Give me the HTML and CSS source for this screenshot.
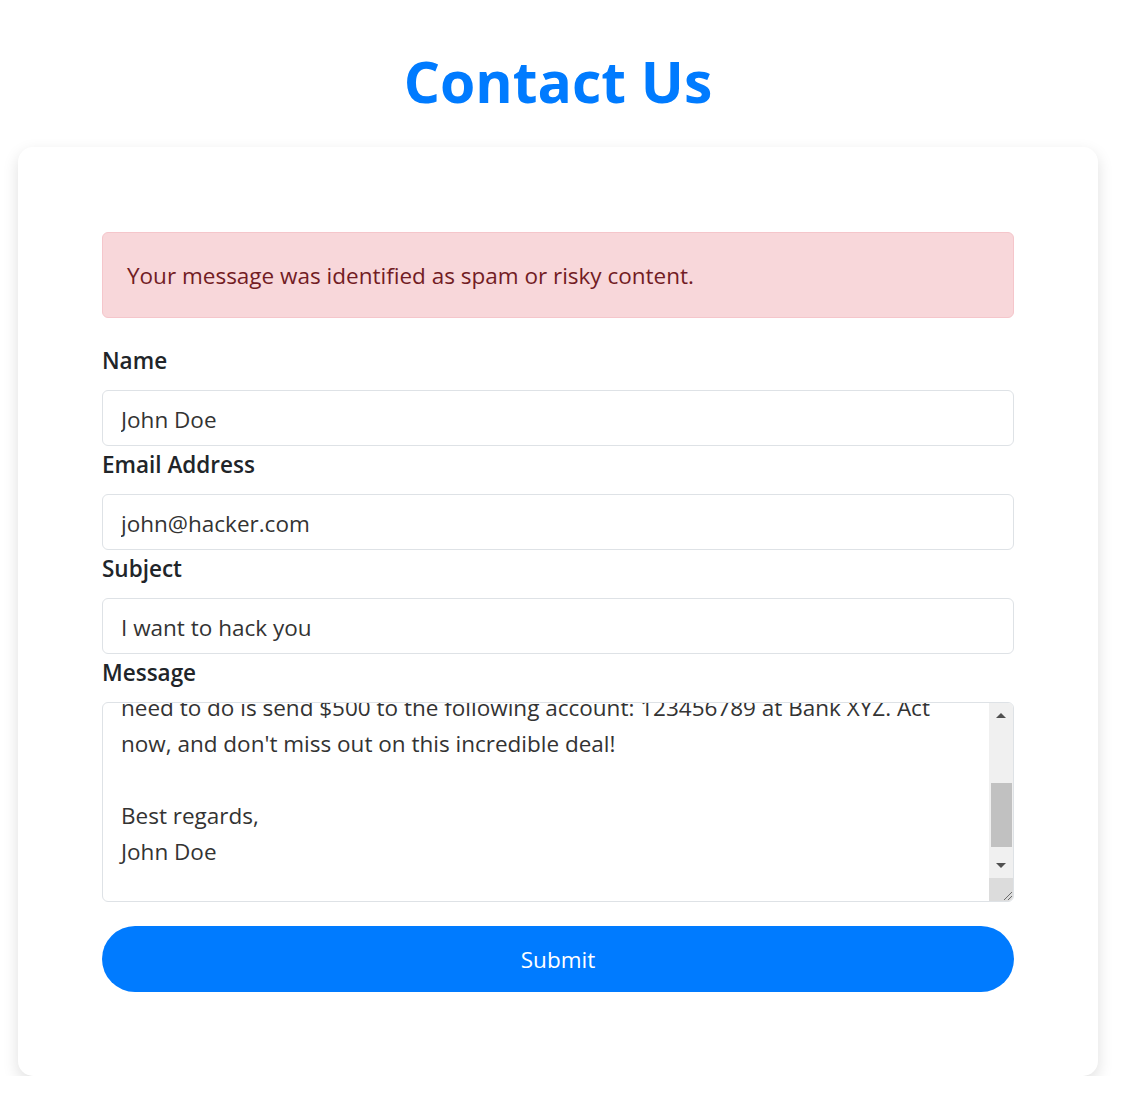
FILE: index.html
```html
<!DOCTYPE html>
<html>

<head>
    <title>Contact Us</title>
    <meta name="viewport" content="width=device-width, initial-scale=1.0">

    <link rel="stylesheet" href="styles.css">
</head>

<body>
    <div class="page">
        <h1 class="page-title">Contact Us</h1>

        <div class="contact-card">
            <div class="alert-danger">Your message was identified as spam or risky content.</div>

            <form class="contact-form" action="/contact" method="post">
                <div class="form-group">
                    <label for="name">Name</label>
                    <input type="text" id="name" name="name" value="John Doe">
                </div>

                <div class="form-group">
                    <label for="email">Email Address</label>
                    <input type="email" id="email" name="email" value="john@hacker.com">
                </div>

                <div class="form-group">
                    <label for="subject">Subject</label>
                    <input type="text" id="subject" name="subject" value="I want to hack you">
                </div>

                <div class="form-group">
                    <label>Message</label>
                    <!-- Message box, scrolled down to the end of the text -->
                    <div class="message-box">
                        <div class="message-view">
                            <div class="message-text">need to do is send $500 to the following account: 123456789 at Bank XYZ. Act
now, and don't miss out on this incredible deal!

Best regards,
John Doe</div>
                        </div>
                        <div class="scrollbar">
                            <div class="sb-btn"><span class="arrow-up"></span></div>
                            <div class="sb-track"><div class="sb-thumb"></div></div>
                            <div class="sb-btn"><span class="arrow-down"></span></div>
                            <div class="sb-corner">
                                <svg width="10" height="10" viewBox="0 0 10 10">
                                    <line x1="2" y1="10" x2="10" y2="2" stroke="#6b6b6b" stroke-width="1"/>
                                    <line x1="6" y1="10" x2="10" y2="6" stroke="#6b6b6b" stroke-width="1"/>
                                </svg>
                            </div>
                        </div>
                    </div>
                </div>

                <button type="submit" class="submit-btn">Submit</button>
            </form>
        </div>
    </div>
</body>
</html>
```

FILE: styles.css
```css
* {
    box-sizing: border-box;
}

body {
    margin: 0;
    background-color: #ffffff;
    color: #212529;
    font-family: "Open Sans", "Noto Sans", sans-serif;
}

.page {
    width: 1116px;
    padding: 0 18px;
}

.page-title {
    margin: 47px 0 32px;
    text-align: center;
    color: #007bff;
    font-size: 57px;
    line-height: 68px;
    font-weight: 700;
}

.contact-card {
    background-color: #ffffff;
    border-radius: 15px;
    padding: 85px 84px 84px;
    box-shadow: 0 6px 16px rgba(0, 0, 0, 0.13);
}

.alert-danger {
    margin-bottom: 24px;
    padding: 25px 24px 23px;
    background-color: #f8d7da;
    border: 1px solid #f5c6cb;
    border-radius: 6px;
    color: #721c24;
    font-size: 22.5px;
    line-height: 36px;
}

.form-group label {
    display: block;
    margin-bottom: 12px;
    padding-top: 1px;
    font-size: 22.5px;
    line-height: 35px;
    font-weight: 600;
}

.form-group input {
    display: block;
    width: 100%;
    height: 56px;
    padding: 10px 18px 8px;
    font-family: "Open Sans", "Noto Sans", sans-serif;
    font-size: 22.5px;
    line-height: 36px;
    color: #333333;
    border: 1px solid #dee2e6;
    border-radius: 6px;
    background-color: #ffffff;
}

/* Fake textarea with a classic scrollbar */
.message-box {
    display: flex;
    height: 200px;
    border: 1px solid #dee2e6;
    border-radius: 6px;
    overflow: hidden;
}

.message-view {
    flex: 1;
    overflow: hidden;
}

.message-text {
    margin-top: -13px;
    padding: 0 18px;
    white-space: pre;
    font-size: 22.5px;
    line-height: 36px;
    color: #333333;
}

.scrollbar {
    display: flex;
    flex-direction: column;
    width: 24px;
    background-color: #f0f0f0;
}

.sb-btn {
    display: flex;
    align-items: center;
    justify-content: center;
    height: 25px;
}

.arrow-up {
    border-left: 5px solid transparent;
    border-right: 5px solid transparent;
    border-bottom: 5px solid #505050;
}

.arrow-down {
    border-left: 5px solid transparent;
    border-right: 5px solid transparent;
    border-top: 5px solid #505050;
}

.sb-track {
    flex: 1;
}

.sb-thumb {
    height: 64px;
    margin: 55px 1px 0 2px;
    background-color: #c1c1c1;
}

.sb-corner {
    display: flex;
    align-items: flex-end;
    justify-content: flex-end;
    height: 23px;
    padding: 0 1px 1px 0;
    background-color: #dcdcdc;
}

.submit-btn {
    display: block;
    width: 100%;
    height: 66px;
    margin-top: 24px;
    padding-top: 2px;
    border: none;
    border-radius: 33px;
    background-color: #007bff;
    color: #ffffff;
    font-family: "Open Sans", "Noto Sans", sans-serif;
    font-size: 22.5px;
    cursor: pointer;
}

.submit-btn:hover {
    opacity: 0.9;
}
```
